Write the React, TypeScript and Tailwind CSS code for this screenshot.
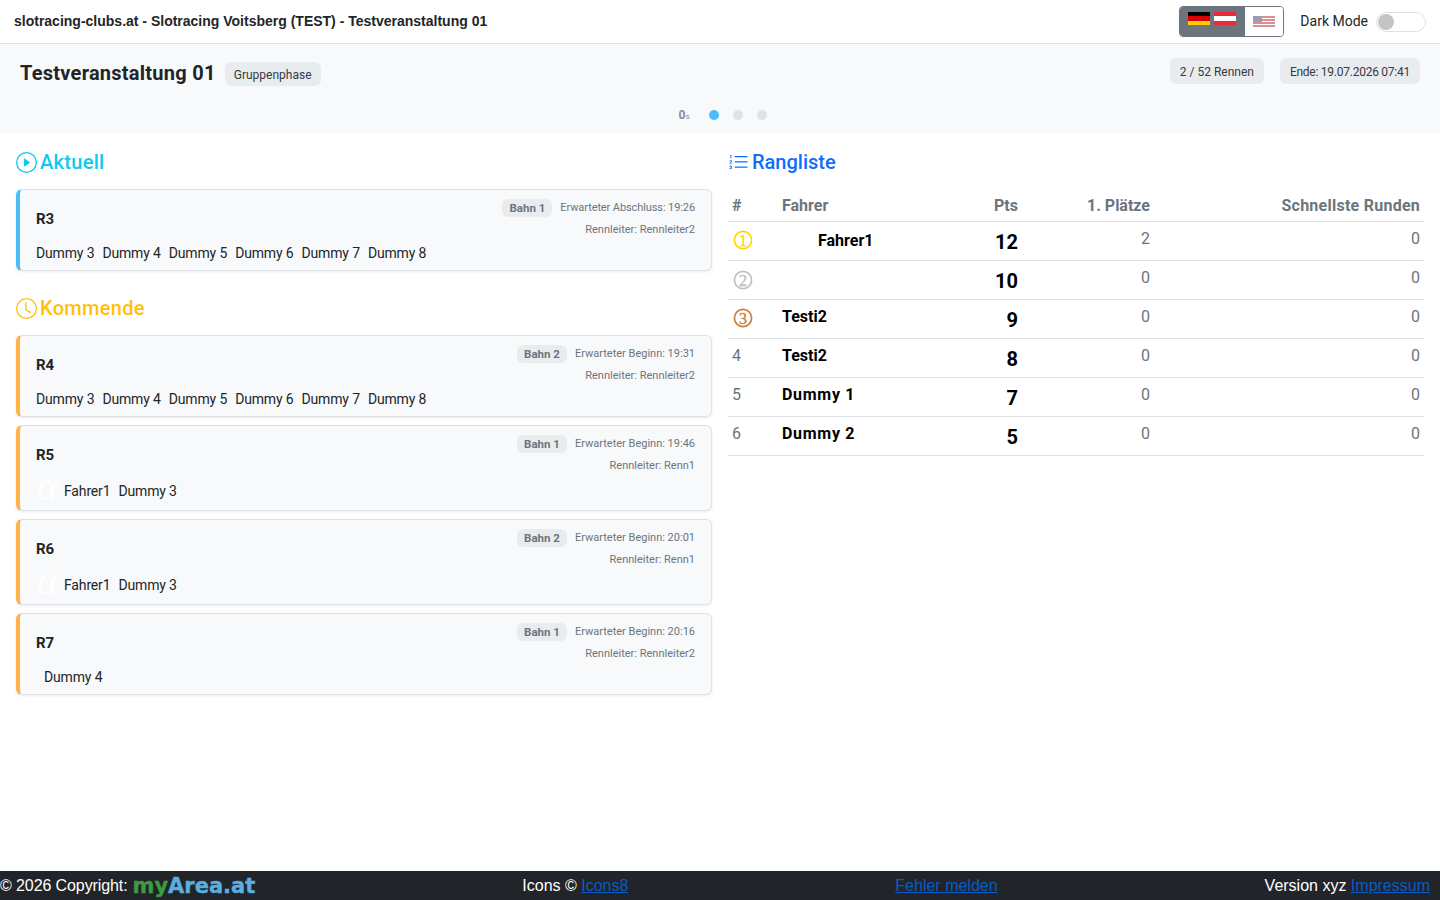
import { BsClock, BsListOl, BsPlayCircle } from "react-icons/bs";

const SANS = "font-['Roboto','Noto_Sans',sans-serif]";
const ARIAL = "font-['Liberation_Sans',Arial,sans-serif]";

type Race = {
  name: string;
  lane: string;
  timeLabel: string;
  leader: string;
  drivers: string[];
  alpha?: boolean;
  indent?: boolean;
  tight?: boolean;
};

const races: Race[] = [
  { name: "R4", lane: "Bahn 2", timeLabel: "Erwarteter Beginn: 19:31", leader: "Rennleiter: Rennleiter2", drivers: ["Dummy 3", "Dummy 4", "Dummy 5", "Dummy 6", "Dummy 7", "Dummy 8"] },
  { name: "R5", lane: "Bahn 1", timeLabel: "Erwarteter Beginn: 19:46", leader: "Rennleiter: Renn1", drivers: ["Fahrer1", "Dummy 3"], alpha: true },
  { name: "R6", lane: "Bahn 2", timeLabel: "Erwarteter Beginn: 20:01", leader: "Rennleiter: Renn1", drivers: ["Fahrer1", "Dummy 3"], alpha: true },
  { name: "R7", lane: "Bahn 1", timeLabel: "Erwarteter Beginn: 20:16", leader: "Rennleiter: Rennleiter2", drivers: ["Dummy 4"], indent: true },
];

const current: Race = {
  name: "R3",
  lane: "Bahn 1",
  timeLabel: "Erwarteter Abschluss: 19:26",
  leader: "Rennleiter: Rennleiter2",
  drivers: ["Dummy 3", "Dummy 4", "Dummy 5", "Dummy 6", "Dummy 7", "Dummy 8"],
  tight: true,
};

const standings = [
  { pos: 1, name: "Fahrer1", pts: 12, first: 2, fast: 0 },
  { pos: 2, name: "", pts: 10, first: 0, fast: 0 },
  { pos: 3, name: "Testi2", pts: 9, first: 0, fast: 0 },
  { pos: 4, name: "Testi2", pts: 8, first: 0, fast: 0 },
  { pos: 5, name: "Dummy 1", pts: 7, first: 0, fast: 0, wide: true },
  { pos: 6, name: "Dummy 2", pts: 5, first: 0, fast: 0, wide: true },
];

function RaceCard({ race, accent }: { race: Race; accent: string }) {
  return (
    <div className={`mb-2 rounded-md border border-l-4 border-[#dee2e6] bg-[#f8f9fa] px-4 pt-[8px] pb-[7px] shadow-[0_1px_3px_rgba(0,0,0,0.08)] ${accent}`}>
      <div className="flex items-center justify-between">
        <div className="text-[15px] font-bold text-[#212529]">{race.name}</div>
        <div className="flex flex-col items-end text-[11px] leading-5 text-[#6c757d]">
          <div className="flex h-5 items-center gap-2">
            <span className="flex h-[18px] items-center rounded-md bg-[#e9ecef] px-[7px] text-[11.5px] font-bold">{race.lane}</span>
            <span className={race.tight ? "tracking-[-0.1px]" : ""}>{race.timeLabel}</span>
          </div>
          <div className="mt-[2px] flex h-5 items-center">{race.leader}</div>
        </div>
      </div>
      <div className={`mt-[3px] flex items-center gap-2 text-[14px] leading-5 tracking-[-0.15px] text-[#212529] ${race.indent ? "pl-2" : ""}`}>
        {race.alpha && (
          <span className="flex h-6 w-5 items-center justify-center pb-[8px] pl-[3px] font-['Liberation_Serif',serif] text-[40px] leading-none text-white italic">α</span>
        )}
        {race.drivers.map((d) => (
          <span key={d}>{d}</span>
        ))}
      </div>
    </div>
  );
}

function SectionTitle({ icon, label, color }: { icon: React.ReactNode; label: string; color: string }) {
  return (
    <h2 className={`mb-3 flex h-[30px] items-center gap-[3px] text-[20px] font-medium ${color}`}>
      {icon}
      {label}
    </h2>
  );
}

function Flags() {
  return (
    <div className="flex h-[31px] w-[105px] overflow-hidden rounded border border-[#6c757d]">
      <div className="flex w-[65px] items-center gap-1 bg-[#6c757d] pb-[6px] pl-2">
        <div className="flex h-[13px] w-[22px] flex-col">
          <div className="flex-1 bg-black" />
          <div className="flex-1 bg-[#dd0000]" />
          <div className="flex-1 bg-[#ffce00]" />
        </div>
        <div className="flex h-[13px] w-[22px] flex-col">
          <div className="flex-1 bg-[#ed2939]" />
          <div className="flex-1 bg-white" />
          <div className="flex-1 bg-[#ed2939]" />
        </div>
      </div>
      <div className="flex flex-1 items-center justify-center bg-white pt-[1px]">
        <svg width="22" height="12" viewBox="0 0 22 12" className="opacity-50">
          <rect width="22" height="12" fill="#b22234" />
          <rect y="2" width="22" height="1" fill="#fff" />
          <rect y="5" width="22" height="1" fill="#fff" />
          <rect y="8" width="22" height="1" fill="#fff" />
          <rect y="11" width="22" height="1" fill="#fff" />
          <rect width="9" height="6" fill="#3c3b6e" />
        </svg>
      </div>
    </div>
  );
}

function Medal({ pos }: { pos: number }) {
  const medals: Record<number, string> = { 1: "text-[#ffd700] mt-[3px]", 2: "text-[#c0c0c0] mt-[4px]", 3: "text-[#cd7f32] mt-[3px]" };
  if (!medals[pos]) return <span>{pos}</span>;
  return (
    <svg width="20" height="20" viewBox="0 0 20 20" className={`ml-[1px] ${medals[pos]}`}>
      <circle cx="10" cy="10" r="8.6" fill="none" stroke="currentColor" strokeWidth="1.7" />
      <text x="10" y="15.5" textAnchor="middle" fontSize="16" stroke="currentColor" strokeWidth="0.35" fontFamily="'Liberation Serif', serif" fill="currentColor">
        {pos}
      </text>
    </svg>
  );
}

export default function App() {
  return (
    <div className={`flex min-h-screen flex-col bg-white ${SANS}`}>
      <header className="flex h-[44px] items-center justify-between border-b border-[#dee2e6] px-[14px]">
        <div className={`text-[14px] font-bold text-[#212529] ${ARIAL}`}>
          slotracing-clubs.at - Slotracing Voitsberg (TEST) - Testveranstaltung 01
        </div>
        <div className="flex items-center">
          <Flags />
          <span className="mr-2 ml-4 text-[14px] text-[#212529]">Dark Mode</span>
          <div className="flex h-5 w-[50px] items-center rounded-full border border-[#dee2e6] bg-white pl-[1px]">
            <div className="h-4 w-4 rounded-full bg-[#c4c4c4]" />
          </div>
        </div>
      </header>

      <section className="flex flex-col bg-[#f8f9fa] px-5 pb-[13px]">
        <div className="mt-[14px] flex items-start justify-between">
          <div className="flex items-start gap-[9px]">
            <h1 className="text-[20px] leading-[30px] font-bold tracking-[0.25px] text-[#212529]">Testveranstaltung 01</h1>
            <span className="mt-1 flex h-6 w-[96px] items-center justify-center rounded-md bg-[#e9ecef] pt-[1px] text-[12px] text-[#343a40]">Gruppenphase</span>
          </div>
          <div className="flex gap-4 text-[12px] text-[#343a40]">
            <span className="flex h-[26px] items-center rounded-md bg-[#e9ecef] px-[10px] pt-[1px]">2 / 52 Rennen</span>
            <span className="flex h-[26px] items-center rounded-md bg-[#e9ecef] px-[10px] pt-[1px] tracking-[-0.25px]">Ende: 19.07.2026 07:41</span>
          </div>
        </div>
        <div className="mt-[22px] flex h-[10px] items-center justify-center pl-[5px]">
          <span className="mr-[19px] text-[12px] font-bold text-[#868e96]">
            0<span className="text-[8px] font-normal">s</span>
          </span>
          <div className="flex gap-[14px]">
            <div className="h-[10px] w-[10px] rounded-full bg-[#4dbdf5]" />
            <div className="h-[10px] w-[10px] rounded-full bg-[#dee2e6]" />
            <div className="h-[10px] w-[10px] rounded-full bg-[#dee2e6]" />
          </div>
        </div>
      </section>

      <main className="grid grid-cols-2 gap-4 px-4">
        <div className="pt-[14px]">
          <SectionTitle icon={<BsPlayCircle className="text-[21px]" />} label="Aktuell" color="text-[#0dcaf0] tracking-[0.3px]" />
          <RaceCard race={current} accent="border-l-[#4dbdf5]" />
          <div className="pt-[14px]">
            <SectionTitle icon={<BsClock className="text-[21px]" />} label="Kommende" color="text-[#ffc107] tracking-[0.3px]" />
            {races.map((r) => (
              <RaceCard key={r.name} race={r} accent="border-l-[#ffb347]" />
            ))}
          </div>
        </div>

        <div className="pt-[14px]">
          <SectionTitle icon={<BsListOl className="text-[21px]" />} label="Rangliste" color="text-[#0d6efd]" />
          <table className="w-full table-fixed border-collapse text-[16px]">
            <colgroup>
              <col className="w-[50px]" />
              <col className="w-[184px]" />
              <col className="w-[60px]" />
              <col className="w-[132px]" />
              <col />
            </colgroup>
            <thead>
              <tr className="h-[32px] border-b border-[#dee2e6] text-[#6c757d]">
                <th className="px-1 pt-[2px] text-left font-bold">#</th>
                <th className="px-1 pt-[2px] text-left font-bold">Fahrer</th>
                <th className="px-1 pt-[2px] text-right font-bold">Pts</th>
                <th className="px-1 pt-[2px] text-right font-bold">1. Plätze</th>
                <th className="px-1 pt-[2px] text-right font-bold tracking-[0.25px]">Schnellste Runden</th>
              </tr>
            </thead>
            <tbody>
              {standings.map((s) => (
                <tr key={s.pos} className="border-b border-[#dee2e6]">
                  <td className="px-1 pt-[5px] pb-[3px] align-top leading-6 text-[#6c757d]">
                    <Medal pos={s.pos} />
                  </td>
                  <td className={`px-1 pt-[5px] pb-[3px] align-top leading-6 font-bold text-black ${s.wide ? "tracking-[0.7px]" : ""}`}>
                    {s.pos === 1 ? <span className="mt-[2px] block pl-9">{s.name}</span> : s.name}
                  </td>
                  <td className="px-1 pt-[5px] pb-[3px] text-right align-top text-[20px] leading-[30px] font-bold text-black">{s.pts}</td>
                  <td className="px-1 pt-[5px] pb-[3px] text-right align-top leading-6 text-[#6c757d]">{s.first}</td>
                  <td className="px-1 pt-[5px] pb-[3px] text-right align-top leading-6 text-[#6c757d]">{s.fast}</td>
                </tr>
              ))}
            </tbody>
          </table>
        </div>
      </main>

      <footer className={`mt-auto flex h-[29px] items-center justify-between bg-[#212529] pt-[1px] pr-[10px] text-[16px] text-white ${ARIAL}`}>
        <div className="flex items-center gap-[5px]">
          <span className="tracking-[-0.1px]">© 2026 Copyright:</span>
          <span className="font-['DejaVu_Sans',sans-serif] text-[21px] leading-none font-bold [-webkit-text-stroke:0.4px_currentColor]">
            <span className="text-[#3f9b3f]">my</span>
            <span className="text-[#5aaee0]">Area.at</span>
          </span>
        </div>
        <div>
          Icons © <a href="#" className="text-[#0a5bc4] underline">Icons8</a>
        </div>
        <a href="#" className="text-[#0a5bc4] underline">Fehler melden</a>
        <div>
          Version xyz <a href="#" className="text-[#0a5bc4] underline">Impressum</a>
        </div>
      </footer>
    </div>
  );
}
